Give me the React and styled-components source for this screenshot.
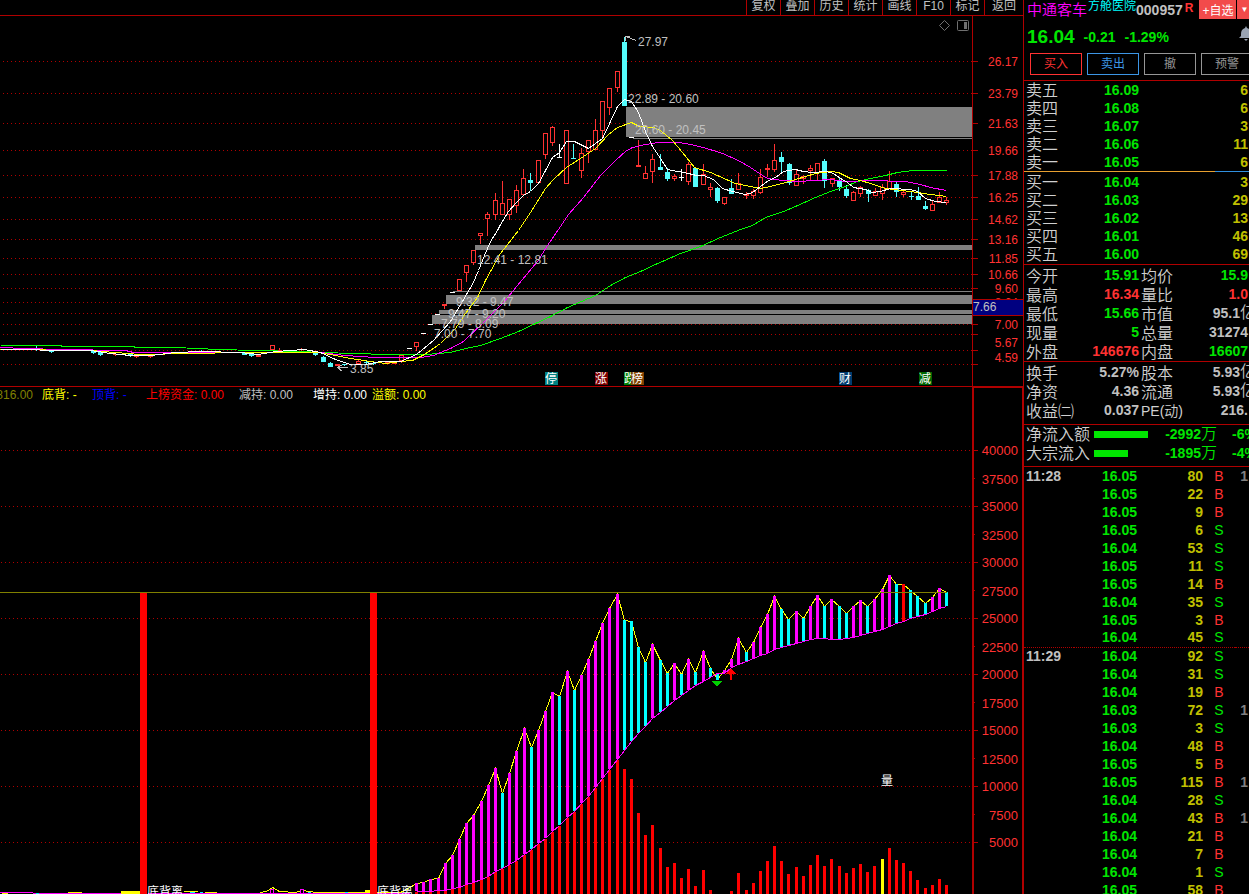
import React from 'react'
import styled, {createGlobalStyle} from 'styled-components'

const GlobalStyle = createGlobalStyle`
    * {
        box-sizing: border-box;
    }

    body {
        margin: 0;
        background: #000;
        color: #c0c0c0;
        font-family: "Liberation Sans", "Noto Sans CJK SC", sans-serif;
        font-size: 12px;
        overflow: hidden;
    }

    button {
        font-family: inherit;
        font-size: 12px;
        cursor: pointer;
    }
`

const RED = '#ff3232'
const GREEN = '#00e600'
const CYAN = '#54fcfc'
const LINE = '#b00000'
const GOLD = '#c0c000'
const GREY = '#c0c0c0'

/* ---------- layout ---------- */

const Page = styled.div`
    display: flex;
    height: 100vh;
    overflow: hidden;
`

const Main = styled.main`
    flex: 1;
    min-width: 0;
    display: flex;
    flex-direction: column;
`

const Toolbar = styled.nav`
    display: flex;
    justify-content: flex-end;
    height: 16px;
    flex-shrink: 0;
    overflow: hidden;
    border-bottom: 1px solid ${LINE};
    border-right: 1px solid ${LINE};
`

const ToolButton = styled.button`
    width: 34px;
    padding: 0 0 4px;
    line-height: 12px;
    color: ${GREY};
    background: none;
    border: 0;
    border-left: 1px solid ${LINE};

    &:last-child {
        width: 39px;
    }
`

const PricePane = styled.section`
    display: flex;
    flex-shrink: 0;
    border-right: 1px solid ${LINE};
`

const FundPane = styled.section`
    display: flex;
    flex: 1;
    min-height: 0;
`

const Plot = styled.div`
    flex: 1;
    min-width: 0;
    overflow: hidden;
    border-top: ${p => p.$ruled ? `1px solid ${LINE}` : '0'};
`

const Drawing = styled.svg`
    display: block;
    width: 100%;
    height: ${p => p.$height}px;
`

const PriceAxis = styled.div`
    width: 51px;
    border-left: 1px solid ${LINE};
`

const FundAxis = styled.div`
    width: 52px;
    overflow: hidden;
    border: 2px solid ${LINE};
    border-bottom: 0;
`

const Legend = styled.div`
    display: grid;
    grid-template-columns: 42px 50px 54px 93px 74px 59px auto;
    height: 17px;
    line-height: 17px;
    white-space: nowrap;
`

const LegendItem = styled.span`
    color: ${p => p.$color};
    direction: ${p => p.$cut ? 'rtl' : 'ltr'};
    padding-right: ${p => p.$cut ? 9 : 0}px;
`

/* ---------- quote panel ---------- */

const Side = styled.aside`
    width: 225px;
    flex-shrink: 0;
    overflow: hidden;
`

const Block = styled.div`
    border-bottom: 1px solid ${LINE};
    height: ${p => p.$height}px;
    padding-top: ${p => p.$inset ? 1 : 0}px;
    overflow: hidden;
`

const TitleRow = styled.div`
    display: flex;
    height: 20px;
    padding-left: 3px;
    white-space: nowrap;
`

const Name = styled.h1`
    margin: 0;
    font-size: 15px;
    font-weight: 350;
    line-height: 20px;
    color: #f0f;
`

const Concept = styled.a`
    margin-left: 1px;
    line-height: 12px;
    color: #0ff;
    text-decoration: none;
`

const Code = styled.span`
    font-size: 14px;
    font-weight: bold;
    line-height: 20px;
`

const Mark = styled.span`
    margin: 0 6px 0 2px;
    font-weight: bold;
    line-height: 17px;
    color: ${RED};
`

const AddButton = styled.button`
    width: ${p => p.$small ? 14 : 37}px;
    height: 19px;
    margin-right: 1px;
    padding: 0;
    flex-shrink: 0;
    border: 0;
    color: #fff;
    font-size: ${p => p.$small ? 8 : 12}px;
    background: #f24b4b;
`

const LastRow = styled.div`
    display: flex;
    align-items: center;
    gap: 9px;
    height: 33px;
    padding-left: 3px;
    color: ${GREEN};
    font-size: 14px;
    font-weight: bold;
`

const Last = styled.strong`
    font-size: 19px;
`

const Bell = styled.svg`
    width: 14px;
    height: 15px;
    margin: 0 -4px 6px auto;
`

const Orders = styled.div`
    display: flex;
    gap: 5px;
    padding-left: 6px;
`

const OrderButton = styled.button`
    width: 52px;
    height: 22px;
    flex-shrink: 0;
    padding: 0 0 3px;
    color: ${p => p.$color};
    background: none;
    border: 1px solid ${p => p.$color};
`

const Grid = styled.table`
    width: 225px;
    table-layout: fixed;
    border-collapse: collapse;
`

const Row = styled.tr`
    height: ${p => p.$height || 18}px;
    border-top: ${p => p.$dotted ? `1px dotted ${LINE}` : '0'};
`

const Label = styled.th`
    padding: 1px 0 0 2px;
    text-align: left;
    white-space: nowrap;
    font-size: ${p => p.$small ? 14 : 16}px;
    font-weight: 350;
    line-height: 17px;
    color: #d0d0d0;
`

const Num = styled.td`
    padding: 0 ${p => p.$pad || 0}px 0 0;
    text-align: right;
    white-space: nowrap;
    font-size: 14px;
    font-weight: bold;
    line-height: 17px;
    color: ${p => p.$color || GREY};
`

const Unit = styled.span`
    font-size: 16px;
    font-weight: 350;
    line-height: 0;
    margin-right: ${p => p.$cut ? -8 : 0}px;
`

const Time = styled.td`
    padding: 0 0 0 2px;
    font-size: 14px;
    font-weight: bold;
    line-height: 17px;
`

const Direction = styled.td`
    padding: 0;
    text-align: center;
    font-size: 14px;
    line-height: 17px;
    color: ${p => p.$buy ? RED : GREEN};
`

const Spread = styled.div`
    height: 1px;
    margin-bottom: 1px;
    background: linear-gradient(90deg, #e8a030 85%, #3090e0 85%);
`

const FlowRow = styled.div`
    display: grid;
    grid-template-columns: 68px 55px 68px auto;
    align-items: center;
    height: 19px;
    padding-left: 2px;
    font-size: 16px;
    font-weight: 350;
    line-height: 19px;
    color: #d0d0d0;
    white-space: nowrap;
`

const FlowBar = styled.div`
    height: 7px;
    background: ${GREEN};
`

const FlowNum = styled.span`
    text-align: right;
    font-size: 14px;
    font-weight: bold;
    color: ${GREEN};
`

const FlowRate = styled(FlowNum)`
    padding-left: 15px;
    text-align: left;
`

/* ---------- data ---------- */

const tools = ['复权', '叠加', '历史', '统计', '画线', 'F10', '标记', '返回']

const legend = [
    ['816.00', '#808000'],
    ['底背: -', '#ff0'],
    ['顶背: -', '#00f'],
    ['上榜资金: 0.00', '#f00'],
    ['减持: 0.00', GREY],
    ['增持: 0.00', '#fff'],
    ['溢额: 0.00', '#ff0'],
]

const sells = [['卖五', '16.09', 6], ['卖四', '16.08', 6], ['卖三', '16.07', 3], ['卖二', '16.06', 11], ['卖一', '16.05', 6]]
const buys = [['买一', '16.04', 3], ['买二', '16.03', 29], ['买三', '16.02', 13], ['买四', '16.01', 46], ['买五', '16.00', 69]]

const today = [
    ['今开', '15.91', GREEN, '均价', '15.9', GREEN],
    ['最高', '16.34', RED, '量比', '1.0', RED],
    ['最低', '15.66', GREEN, '市值', '95.1', GREY, '亿'],
    ['现量', '5', GREEN, '总量', '31274', GREY],
    ['外盘', '146676', RED, '内盘', '16607', GREEN],
]

const basics = [
    ['换手', '5.27%', GREY, '股本', '5.93', GREY, '亿'],
    ['净资', '4.36', GREY, '流通', '5.93', GREY, '亿'],
    ['收益㈡', '0.037', GREY, 'PE(动)', '216.', GREY],
]

const flows = [['净流入额', 54, '-2992', '-6%'], ['大宗流入', 34, '-1895', '-4%']]

const ticks = [
    ['16.05', 80, 'B', 1, '11:28'], ['16.05', 22, 'B'], ['16.05', 9, 'B'], ['16.05', 6, 'S'],
    ['16.04', 53, 'S'], ['16.05', 11, 'S'], ['16.05', 14, 'B'], ['16.04', 35, 'S'],
    ['16.05', 3, 'B'], ['16.04', 45, 'S'], ['16.04', 92, 'S', '', '11:29'], ['16.04', 31, 'S'],
    ['16.04', 19, 'B'], ['16.03', 72, 'S', 1], ['16.03', 3, 'S'], ['16.04', 48, 'B'],
    ['16.05', 5, 'B'], ['16.05', 115, 'B', 1], ['16.04', 28, 'S'], ['16.04', 43, 'B', 1],
    ['16.04', 21, 'B'], ['16.04', 7, 'B'], ['16.04', 1, 'S'], ['16.05', 58, 'B'],
]

const priceLevels = [
    [61, '26.17'], [93, '23.79'], [123, '21.63'], [150, '19.66'], [175, '17.88'], [197, '16.25'],
    [219, '14.62'], [239, '13.16'], [258, '11.85'], [274, '10.66'], [288, '9.60'], [302, '8.64'],
    [313], [324, '7.00'], [334], [350, '5.67', 342], [364, '4.59', 357],
]

const gaps = [
    [626, 107, 30], [633, 138, 1], [475, 245, 5], [453, 291, 1],
    [446, 295, 9], [439, 310, 4], [432, 315, 9],
]

const gapLabels = [
    [638, 46, '27.97'], [628, 103, '22.89 - 20.60'], [635, 134, '20.60 - 20.45'],
    [477, 264, '12.41 - 12.81'], [456, 306, '9.32 - 9.47'], [448, 318, '9.47 - 9.20'],
    [441, 328, '7.79 - 8.09'], [434, 338, '7.00 - 7.70'], [350, 373, '3.85'],
]

// x, high, low, body top, body bottom, kind (r rise, c fall, w flat)
const candles = [
    [409, 348, 348, 348, 348, 'w'], [416, 342, 350, 342, 346, 'r'], [423, 333, 333, 333, 333, 'w'],
    [430, 324, 324, 324, 324, 'w'], [437, 314, 314, 314, 314, 'w'], [444, 304, 308, 304, 305, 'r'],
    [452, 292, 292, 292, 292, 'w'], [459, 279, 290, 279, 290, 'r'], [466, 265, 281, 265, 272, 'r'],
    [473, 250, 264, 250, 262, 'r'], [480, 233, 243, 233, 235, 'r'], [487, 212, 235, 214, 218, 'r'],
    [495, 193, 219, 200, 214, 'r'], [502, 181, 214, 203, 214, 'r'], [509, 199, 219, 199, 214, 'r'],
    [516, 185, 212, 190, 205, 'r'], [523, 169, 194, 178, 194, 'r'], [530, 173, 190, 180, 182, 'c'],
    [538, 160, 182, 160, 182, 'r'], [545, 133, 158, 133, 154, 'r'], [552, 126, 145, 127, 142, 'r'],
    [559, 144, 157, 157, 157, 'w'], [566, 130, 183, 130, 183, 'r'], [573, 144, 158, 158, 158, 'c'],
    [581, 148, 177, 153, 170, 'r'], [588, 140, 162, 140, 151, 'r'], [595, 119, 149, 130, 149, 'r'],
    [602, 101, 137, 101, 130, 'r'], [609, 88, 114, 88, 107, 'r'], [617, 71, 91, 71, 87, 'r'],
    [624, 37, 105, 42, 105, 'c'], [631, 137, 137, 137, 137, 'w'], [638, 140, 166, 165, 166, 'r'],
    [645, 166, 178, 173, 178, 'r'], [652, 154, 182, 159, 171, 'r'], [660, 154, 169, 167, 169, 'c'],
    [667, 168, 180, 172, 178, 'c'], [674, 174, 180, 176, 178, 'r'], [681, 169, 180, 177, 177, 'w'],
    [688, 162, 184, 164, 181, 'r'], [695, 168, 186, 168, 186, 'c'], [703, 164, 184, 174, 184, 'r'],
    [710, 183, 196, 187, 189, 'r'], [717, 187, 202, 188, 200, 'c'], [724, 197, 204, 197, 203, 'r'],
    [731, 179, 193, 188, 193, 'c'], [738, 173, 189, 183, 189, 'r'], [746, 192, 198, 194, 195, 'r'],
    [753, 189, 198, 191, 195, 'r'], [760, 169, 193, 177, 192, 'r'], [767, 164, 176, 168, 169, 'r'],
    [774, 144, 171, 160, 169, 'r'], [781, 152, 171, 157, 161, 'c'], [789, 163, 184, 164, 182, 'c'],
    [796, 169, 185, 174, 185, 'r'], [803, 175, 183, 176, 178, 'r'], [810, 165, 179, 168, 170, 'r'],
    [817, 163, 180, 163, 172, 'r'], [824, 159, 187, 161, 180, 'c'], [832, 178, 186, 178, 183, 'r'],
    [839, 177, 190, 180, 186, 'c'], [846, 185, 197, 189, 195, 'c'], [853, 191, 200, 192, 200, 'r'],
    [860, 186, 196, 187, 193, 'r'], [868, 189, 201, 190, 193, 'c'], [875, 188, 195, 191, 195, 'r'],
    [882, 184, 199, 187, 193, 'r'], [889, 171, 188, 181, 188, 'r'], [896, 181, 196, 184, 191, 'c'],
    [903, 191, 196, 192, 194, 'r'], [911, 192, 199, 196, 196, 'c'], [918, 187, 199, 196, 199, 'c'],
    [925, 201, 209, 206, 208, 'c'], [932, 201, 210, 204, 210, 'r'], [939, 192, 202, 197, 202, 'r'],
    [946, 197, 204, 200, 202, 'r'],
    [28, 348, 349, 348, 348, 'r'], [36, 346, 350, 348, 349, 'c'], [51, 350, 352, 350, 351, 'c'],
    [93, 350, 353, 350, 352, 'c'], [100, 351, 355, 352, 354, 'c'], [115, 353, 355, 354, 354, 'r'],
    [130, 353, 356, 354, 355, 'c'], [136, 355, 357, 355, 356, 'r'], [150, 355, 357, 356, 356, 'r'],
    [201, 350, 352, 351, 351, 'c'], [244, 353, 354, 353, 354, 'c'], [251, 353, 356, 354, 355, 'c'],
    [258, 354, 356, 355, 356, 'r'], [272, 345, 349, 345, 349, 'r'], [279, 348, 351, 350, 350, 'r'],
    [301, 348, 350, 349, 349, 'r'], [315, 352, 355, 353, 354, 'c'], [323, 356, 361, 357, 361, 'c'],
    [330, 362, 366, 363, 366, 'c'], [337, 364, 365, 364, 365, 'r'], [344, 364, 365, 364, 364, 'c'],
    [358, 360, 364, 361, 363, 'r'], [366, 361, 363, 362, 362, 'c'], [373, 362, 364, 363, 363, 'c'],
    [387, 362, 363, 362, 363, 'r'], [394, 362, 363, 362, 363, 'r'], [401, 355, 362, 355, 360, 'r'],
]

const averages = [
    ['#0f0', '0,345 60,345 62,346 133,346 135,347 175,347 218,349 255,350 300,351 320,352 355,353 385,354 425,354 450,352 465,348 480,345 500,338 518,331 535,323 550,316 567,307 595,295 610,285 625,277 640,271 655,264 680,253 700,246 720,237 740,229 752,225 765,217 783,211 795,206 815,197 830,191 845,186 857,181 870,178 885,175 897,172 912,170 946,170'],
    ['#f0f', '0,347 25,348 60,349 125,350 133,352 200,352 320,352 345,355 375,357 420,357 433,355 450,348 463,341 482,323 503,302 517,285 537,261 547,245 558,229 568,214 583,197 600,175 615,160 625,151 632,147 645,144 658,142 678,142 690,144 703,147 722,153 738,160 750,167 765,177 772,179 797,181 830,179 845,181 870,180 905,181 920,184 930,187 946,190'],
    ['#ff0', '0,349 90,350 140,354 190,353 240,352 318,352 335,355 350,358 370,361 385,363 400,361 412,360 424,354 440,343 455,328 465,313 477,297 485,280 500,253 518,230 530,212 545,188 553,179 566,167 580,158 595,148 608,134 617,127 631,122 639,126 653,127 660,130 672,140 682,152 694,167 710,172 735,183 760,188 770,186 785,182 795,179 815,173 830,171 838,172 850,178 860,180 870,183 885,188 910,191 930,194 946,196'],
    ['#fff', '0,349 28,349 50,350 90,350 110,353 130,355 150,355 175,352 200,351 240,352 258,354 275,351 304,349 320,352 335,359 350,364 365,364 380,361 400,361 416,354 433,340 450,321 466,294 472,284 478,270 484,255 490,241 497,230 500,224 508,211 516,202 523,195 530,191 538,183 545,170 552,157 559,152 566,141 574,141 588,148 602,138 610,121 617,106 624,99 631,101 638,112 645,131 652,146 660,158 667,169 688,173 696,175 703,175 713,179 722,188 732,191 745,194 752,192 760,186 768,180 775,177 783,171 795,169 803,171 811,172 826,171 833,173 840,178 847,182 853,187 865,189 872,192 880,191 890,188 910,189 917,191 925,198 935,201 946,202'],
]

const badges = [
    [545, '停', '#008080'], [595, '涨', '#800000'], [624, '跌', '#008000'],
    [631, '榜', '#804000'], [839, '财', '#003c70'], [919, '减', '#006400'],
]

const fundLevels = [
    [450, '40000'], [478, '37500'], [506, '35000'], [534, '32500'], [562, '30000'], [590, '27500'],
    [618, '25000'], [646, '22500'], [674, '20000'], [702, '17500'], [730, '15000'], [758, '12500'],
    [786, '10000'], [814, '7500'], [842, '5000'],
]

const upper = [
    883, 882, 879, 878, 863, 855, 839, 823, 815, 801, 785, 768, 793, 773, 751, 728, 747, 730, 711, 692,
    696, 671, 690, 675, 659, 641, 623, 608, 594, 620, 621, 647, 662, 644, 660, 673, 663, 674, 659, 672,
    651, 668, 679, 670, 659, 638, 652, 642, 627, 614, 596, 609, 619, 611, 618, 606, 595, 606, 599, 606,
    613, 606, 600, 606, 599, 589, 575, 584, 584, 590, 596, 603, 597, 588, 592,
]

const lower = [
    891, 891, 891, 890, 890, 888, 887, 884, 882, 879, 876, 871, 868, 864, 860, 854, 849, 843, 838, 831,
    825, 817, 811, 803, 796, 787, 778, 769, 759, 750, 741, 733, 726, 718, 712, 706, 700, 695, 690, 685,
    681, 677, 673, 673, 667, 664, 661, 658, 655, 653, 649, 647, 645, 643, 641, 639, 638, 638, 639, 639,
    638, 637, 635, 633, 631, 629, 626, 623, 621, 618, 616, 614, 611, 608, 606,
]

// volume after the peak, before it the bars reach up to the lower line
const volume = [
    769, 779, 813, 835, 825, 848, 867, 863, 878, 869, 886, 870, 890, 894, 894, 891, 873, 890, 883, 871,
    861, 846, 861, 874, 867, 876, 865, 855, 866, 859, 866, 873, 868, 864, 872, 866, 859, 848, 860, 863,
    871, 880, 888, 885, 879, 885,
]

const falling = [12, 16, 20, 22, 29, 30, 31, 32, 34, 35, 37, 39, 41, 42, 46, 51, 52, 54, 57, 59, 60, 63, 67, 69, 70, 71, 74]

const barX = i => Math.round(945 - 7.16 * (74 - i))
const linePoints = ys => ys.map((y, i) => `${barX(i) + 1},${y}`).join(' ')

const barColor = i => {
    if (i === 68) return '#f00'
    return falling.includes(i) ? '#0ff' : '#f0f'
}

/* ---------- charts ---------- */

function Candle({data}) {
    const [x, high, low, top, bottom, kind] = data
    const color = {r: RED, c: CYAN, w: '#fff'}[kind]
    const h = bottom - top
    return (
        <g fill={color}>
            {high < top && <rect x={x} y={high} width="1" height={top - high}/>}
            {low > bottom && <rect x={x} y={bottom} width="1" height={low - bottom + 1}/>}
            {kind === 'r' && h > 1
                ? <rect x={x - 1.5} y={top + 0.5} width="4" height={h} fill="#000" stroke={color}/>
                : <rect x={x - 2} y={top} width="5" height={h + 1}/>}
        </g>
    )
}

function PriceChart() {
    return (
        <Drawing $height={370} viewBox="0 16 972 370" preserveAspectRatio="xMaxYMin meet" fontSize="12">
            <g shapeRendering="crispEdges">
                {priceLevels.map(([y]) => (
                    <path key={y} d={`M3 ${y}.5H972`} stroke={LINE} strokeDasharray="1 3"/>
                ))}
                {gaps.map(([x, y, h]) => <rect key={y} x={x} y={y} width={972 - x} height={h} fill="#808080"/>)}
                {candles.map(c => <Candle key={c[0]} data={c}/>)}
                <g transform="translate(.5 .5)" fill="none">
                    {averages.map(([color, points]) => <polyline key={color} points={points} stroke={color}/>)}
                    <path d="M625 40v-4h4M625 36l11 4M347 367h-10M342 364l-5 3 5 4" stroke={GREY}/>
                </g>
            </g>
            <g fill={GREY}>
                {gapLabels.map(([x, y, text]) => <text key={y} x={x} y={y}>{text}</text>)}
            </g>
            <g fill="none" stroke="#707070">
                <path d="M944.5 20.5l5 5-5 5-5-5z"/>
                <rect x="957.5" y="20.5" width="11" height="10" rx="1"/>
                <rect x="964" y="22" width="3" height="7" fill="#707070" stroke="none"/>
            </g>
            {badges.map(([x, text, color]) => (
                <g key={text}>
                    <rect x={x} y="372" width="13" height="13" fill={color}/>
                    <text x={x} y="383" fill="#fff">{text}</text>
                </g>
            ))}
        </Drawing>
    )
}

function PriceScale() {
    return (
        <Drawing $height={370} viewBox="973 16 50 370" fontSize="12" fill={RED} textAnchor="end">
            {priceLevels.map(([y, text, at]) => (
                <g key={y}>
                    <rect x="973" y={y} width="5" height="1" fill={LINE}/>
                    {text && <text x="1018" y={(at || y) + 5}>{text}</text>}
                </g>
            ))}
            <rect x="973" y="299" width="50" height="17" fill={LINE}/>
            <rect x="973" y="300" width="50" height="15" fill="#000080"/>
            <text x="973" y="311" fill={GREY} textAnchor="start">7.66</text>
        </Drawing>
    )
}

function FundChart() {
    return (
        <Drawing $height={490} viewBox="0 404 972 490" preserveAspectRatio="xMaxYMin meet" fontSize="12">
            <g shapeRendering="crispEdges">
                {fundLevels.filter((_, i) => i % 2 === 0).map(([y]) => (
                    <path key={y} d={`M1 ${y}.5H972`} stroke={LINE} strokeDasharray="1 3"/>
                ))}
                <g transform="translate(.5 .5)" fill="none">
                    <polyline points={`260,892 266,891 272,887 279,891 295,892 302,890 316,892 355,892 400,892 408,888 ${linePoints(upper)}`} stroke="#ff0"/>
                </g>
                <rect x="121" y="891" width="19" height="3" fill="#ff0"/>
                <rect x="365" y="890" width="7" height="4" fill="#ff0"/>
                <path d="M0 892.5H33M33 893.5H121M148 893.5H410M270 889h3v4h-3zM300 889h3v4h-3z" stroke="#f0f"/>
                <path d="M36 893.5h3M78 892.5h3M190 892.5h5M200 892.5h3M214 892.5h3M308 892.5h3M345 892.5h3" stroke="#0ff"/>
                <path d="M2 893.5h6M68 892.5h14M184 891.5h14M205 892.5h12" stroke="#ff0"/>
                {upper.map((y, i) => (
                    <g key={i}>
                        <rect x={barX(i)} y={i === 42 ? 673 : y} width="3" height={i === 42 ? 7 : Math.max(lower[i] - y, 3)} fill={barColor(i)}/>
                        <rect
                            x={barX(i)}
                            y={i < 29 ? lower[i] + 1 : volume[i - 29]}
                            width="3"
                            height={894 - (i < 29 ? lower[i] + 1 : volume[i - 29])}
                            fill={i === 65 ? '#ff0' : '#f00'}
                        />
                    </g>
                ))}
                <polyline points={linePoints(lower)} transform="translate(.5 .5)" fill="none" stroke="#f0f"/>
                <rect x="140" y="592" width="7" height="302" fill="#f00"/>
                <rect x="370" y="592" width="7" height="302" fill="#f00"/>
                <rect x="0" y="592" width="947" height="1" fill="#808000"/>
                <path d="M712 681h10l-5 6z" fill="#00d000"/>
                <path d="M731 668l5 6h-4v6h-2v-6h-4z" fill="#f00"/>
            </g>
            <g fill="#fff">
                <text x="881" y="785">量</text>
                <text x="147" y="896">底背离</text>
                <text x="377" y="896">底背离</text>
            </g>
        </Drawing>
    )
}

function FundScale() {
    return (
        <Drawing $height={506} viewBox="974 388 48 506" fontSize="13" fill={RED} textAnchor="end">
            {fundLevels.map(([y, text], i) => (
                <g key={y}>
                    <rect x="974" y={y} width={i % 2 ? 1 : 4} height="1" fill={LINE}/>
                    <text x="1018" y={y + (i % 2 ? 6 : 5)}>{text}</text>
                </g>
            ))}
        </Drawing>
    )
}

/* ---------- panel parts ---------- */

function OrderBook({rows}) {
    return (
        <Grid>
            <colgroup>
                <col width="40"/>
                <col width="75"/>
                <col/>
            </colgroup>
            <tbody>
                {rows.map(([label, price, size]) => (
                    <Row key={label}>
                        <Label scope="row">{label}</Label>
                        <Num $color={GREEN}>{price}</Num>
                        <Num $color={GOLD} $pad={1}>{size}</Num>
                    </Row>
                ))}
            </tbody>
        </Grid>
    )
}

function Stats({rows}) {
    return (
        <Grid>
            <colgroup>
                <col width="50"/>
                <col width="65"/>
                <col width="46"/>
                <col/>
            </colgroup>
            <tbody>
                {rows.map(([label, value, color, label2, value2, color2, unit]) => (
                    <Row key={label} $height={19}>
                        <Label scope="row">{label}</Label>
                        <Num $color={color}>{value}</Num>
                        <Label scope="row" $small={label2.startsWith('PE')}>{label2}</Label>
                        <Num $color={color2} $pad={1}>{value2}{unit && <Unit $cut>{unit}</Unit>}</Num>
                    </Row>
                ))}
            </tbody>
        </Grid>
    )
}

function Ticks() {
    return (
        <Grid>
            <colgroup>
                <col width="50"/>
                <col width="63"/>
                <col width="66"/>
                <col width="32"/>
                <col/>
            </colgroup>
            <tbody>
                {ticks.map(([price, size, side, count, time], i) => (
                    <Row key={i} $dotted={i > 0 && time}>
                        <Time>{time}</Time>
                        <Num $color={GREEN}>{price}</Num>
                        <Num $color={GOLD}>{size}</Num>
                        <Direction $buy={side === 'B'}>{side}</Direction>
                        <Num $color="#808080" $pad={1}>{count}</Num>
                    </Row>
                ))}
            </tbody>
        </Grid>
    )
}

function App() {
    return (
        <Page>
            <GlobalStyle/>
            <Main>
                <Toolbar>
                    {tools.map(t => <ToolButton key={t}>{t}</ToolButton>)}
                </Toolbar>
                <PricePane>
                    <Plot><PriceChart/></Plot>
                    <PriceAxis><PriceScale/></PriceAxis>
                </PricePane>
                <FundPane>
                    <Plot $ruled>
                        <Legend>
                            {legend.map(([text, color], i) => (
                                <LegendItem key={text} $color={color} $cut={i === 0}>{text}</LegendItem>
                            ))}
                        </Legend>
                        <FundChart/>
                    </Plot>
                    <FundAxis><FundScale/></FundAxis>
                </FundPane>
            </Main>
            <Side>
                <Block $height={81}>
                    <TitleRow>
                        <Name>中通客车</Name>
                        <Concept href="#concept">方舱医院</Concept>
                        <Code>000957</Code>
                        <Mark>R</Mark>
                        <AddButton>+自选</AddButton>
                        <AddButton $small aria-label="更多">▼</AddButton>
                    </TitleRow>
                    <LastRow>
                        <Last>16.04</Last>
                        <span>-0.21</span>
                        <span>-1.29%</span>
                        <Bell viewBox="0 0 14 15">
                            <path d="M7 0l1 2c3 1 4 3 4 6v2l2 2H0l2-2V8c0-3 1-5 4-6zM5 13h4l-2 2z" fill="#9aa4b4"/>
                        </Bell>
                    </LastRow>
                    <Orders>
                        <OrderButton $color={RED}>买入</OrderButton>
                        <OrderButton $color="#3c96e6">卖出</OrderButton>
                        <OrderButton $color="#969696">撤</OrderButton>
                        <OrderButton $color="#969696">预警</OrderButton>
                    </Orders>
                </Block>
                <OrderBook rows={sells}/>
                <Spread/>
                <Block $height={92}><OrderBook rows={buys}/></Block>
                <Block $height={97} $inset><Stats rows={today}/></Block>
                <Block $height={63} $inset><Stats rows={basics}/></Block>
                <Block $height={42}>
                    {flows.map(([label, width, amount, percent]) => (
                        <FlowRow key={label}>
                            <span>{label}</span>
                            <FlowBar style={{width}}/>
                            <FlowNum>{amount}<Unit>万</Unit></FlowNum>
                            <FlowRate>{percent}</FlowRate>
                        </FlowRow>
                    ))}
                </Block>
                <Ticks/>
            </Side>
        </Page>
    )
}

export default App
